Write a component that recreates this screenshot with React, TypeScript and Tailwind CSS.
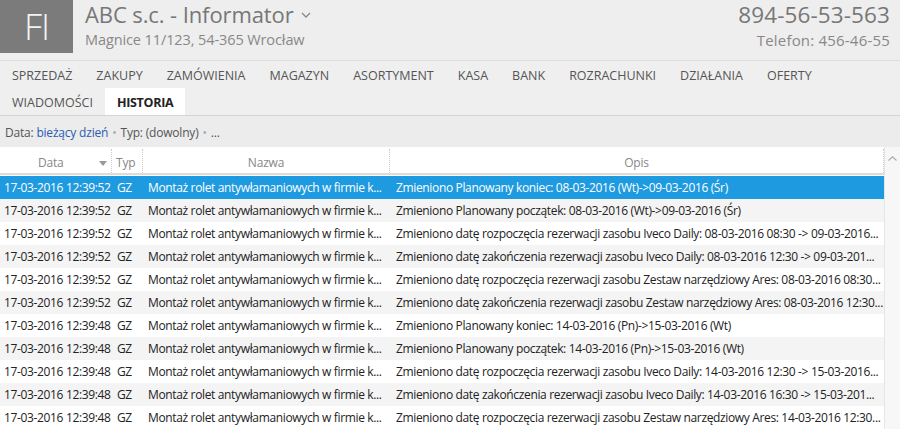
import React from "react";

const rows = [
  ["17-03-2016 12:39:52", "Zmieniono Planowany koniec: 08-03-2016 (Wt)->09-03-2016 (Śr)"],
  ["17-03-2016 12:39:52", "Zmieniono Planowany początek: 08-03-2016 (Wt)->09-03-2016 (Śr)"],
  ["17-03-2016 12:39:52", "Zmieniono datę rozpoczęcia rezerwacji zasobu Iveco Daily: 08-03-2016 08:30 -> 09-03-2016..."],
  ["17-03-2016 12:39:52", "Zmieniono datę zakończenia rezerwacji zasobu Iveco Daily: 08-03-2016 12:30 -> 09-03-201..."],
  ["17-03-2016 12:39:52", "Zmieniono datę rozpoczęcia rezerwacji zasobu Zestaw narzędziowy Ares: 08-03-2016 08:30..."],
  ["17-03-2016 12:39:52", "Zmieniono datę zakończenia rezerwacji zasobu Zestaw narzędziowy Ares: 08-03-2016 12:30..."],
  ["17-03-2016 12:39:48", "Zmieniono Planowany koniec: 14-03-2016 (Pn)->15-03-2016 (Wt)"],
  ["17-03-2016 12:39:48", "Zmieniono Planowany początek: 14-03-2016 (Pn)->15-03-2016 (Wt)"],
  ["17-03-2016 12:39:48", "Zmieniono datę rozpoczęcia rezerwacji zasobu Iveco Daily: 14-03-2016 12:30 -> 15-03-2016..."],
  ["17-03-2016 12:39:48", "Zmieniono datę zakończenia rezerwacji zasobu Iveco Daily: 14-03-2016 16:30 -> 15-03-201..."],
  ["17-03-2016 12:39:48", "Zmieniono datę rozpoczęcia rezerwacji zasobu Zestaw narzędziowy Ares: 14-03-2016 12:30..."],
];

const menu1 = ["SPRZEDAŻ", "ZAKUPY", "ZAMÓWIENIA", "MAGAZYN", "ASORTYMENT", "KASA", "BANK", "ROZRACHUNKI", "DZIAŁANIA", "OFERTY"];

export default function App() {
  return (
    <div
      className="w-[900px] h-[429px] overflow-hidden bg-white text-[#222]"
      style={{ fontFamily: "'Open Sans', 'Noto Sans', sans-serif" }}
    >
      {/* Header */}
      <div className="h-[61px] bg-[#eeeeee] flex border-b border-[#dcdcdc]">
        <div className="w-[73px] h-[53px] bg-[#7b7b7b] flex items-center justify-center text-[#f2f2f2] text-[36px] font-light tracking-[-1px]">
          FI
        </div>
        <div className="flex flex-col pl-[12px]">
          <div className="flex items-center text-[22px] h-[28px] leading-[30px] text-[#777] tracking-[-0.1px]">
            ABC s.c. - Informator
            <svg width="10" height="6" viewBox="0 0 10 6" className="ml-[7px] mt-[2px]">
              <path d="M1 1 L5 5 L9 1" stroke="#888" strokeWidth="1.3" fill="none" />
            </svg>
          </div>
          <div className="text-[14.5px] leading-[20px] text-[#888] tracking-[-0.1px] mt-[2px]">
            Magnice 11/123, 54-365 Wrocław
          </div>
        </div>
        <div className="ml-auto flex flex-col items-end pr-[10px]">
          <div className="text-[22.5px] h-[28px] leading-[30px] text-[#777] tracking-[0.1px]">894-56-53-563</div>
          <div className="text-[15px] leading-[20px] text-[#888] tracking-[0.2px] mt-[2px]">Telefon: 456-46-55</div>
        </div>
      </div>

      {/* Menu */}
      <div className="bg-[#efefef] border-b border-[#d4d4d4] text-[12.5px] text-[#555] tracking-[0px]">
        <div className="flex h-[27px] items-center pt-[3px]">
          {menu1.map((m) => (
            <div key={m} className="px-[12px] flex items-center">{m}</div>
          ))}
        </div>
        <div className="flex h-[27px] items-stretch">
          <div className="px-[12px] flex items-center pt-[3px]">WIADOMOŚCI</div>
          <div className="px-[12px] flex items-center pt-[3px] bg-white font-bold text-[#222] tracking-[-0.3px]">HISTORIA</div>
        </div>
      </div>

      {/* Filter */}
      <div className="h-[31px] bg-[#ececec] flex items-center pt-[2px] px-[5px] text-[12px] text-[#555] tracking-[-0.2px]">
        <span>Data:&nbsp;</span>
        <span className="text-[#2a5db0]">bieżący dzień</span>
        <span className="text-[#aaa] mx-[4px]">•</span>
        <span>Typ: (dowolny)</span>
        <span className="text-[#aaa] mx-[4px]">•</span>
        <span>...</span>
      </div>

      {/* Table */}
      <div className="flex">
        <div className="w-[884px]">
          <div className="h-[26px] flex border-b-2 border-[#dcdcdc] text-[12px] text-[#888] tracking-[-0.2px] mt-[2px]">
            <div className="w-[112px] flex items-center pt-[4px] border-r border-dotted border-[#ccc] relative">
              <span className="ml-[38px]">Data</span>
              <svg width="8" height="5" viewBox="0 0 8 5" className="absolute left-[99px] top-[12px]">
                <path d="M0 0 L8 0 L4 5 Z" fill="#999" />
              </svg>
            </div>
            <div className="w-[31px] flex items-center pt-[4px] pl-[4px] border-r border-dotted border-[#ccc]">Typ</div>
            <div className="w-[247px] flex items-center pt-[4px] justify-center border-r border-dotted border-[#ccc]">Nazwa</div>
            <div className="flex-1 flex items-center pt-[4px] justify-center border-r border-dotted border-[#ccc]">Opis</div>
          </div>
          <div className="mt-[1px]">
            {rows.map((r, i) => {
              const sel = i === 0;
              const bg = sel ? "bg-[#1e9ae0] text-white" : i % 2 === 1 ? "bg-[#f4f4f4] text-[#222]" : "bg-white text-[#222]";
              return (
                <div key={i} className={`h-[23px] flex items-center text-[12px] tracking-[-0.35px] whitespace-nowrap ${bg}`}>
                  <div className="w-[112px] pl-[4px] overflow-hidden">{r[0]}</div>
                  <div className="w-[31px] pl-[5px]">GZ</div>
                  <div className="w-[247px] pl-[5px] overflow-hidden">Montaż rolet antywłamaniowych w firmie k...</div>
                  <div className="flex-1 pl-[6px] overflow-hidden">{r[1]}</div>
                </div>
              );
            })}
          </div>
        </div>
        <div className="w-[16px] bg-[#f7f7f7] border-l border-[#e6e6e6] flex justify-center pt-[9px] h-[300px]">
          <svg width="9" height="5" viewBox="0 0 9 5">
            <path d="M0.5 4.5 L4.5 0.8 L8.5 4.5" stroke="#aaa" strokeWidth="1.1" fill="none" />
          </svg>
        </div>
      </div>
    </div>
  );
}
